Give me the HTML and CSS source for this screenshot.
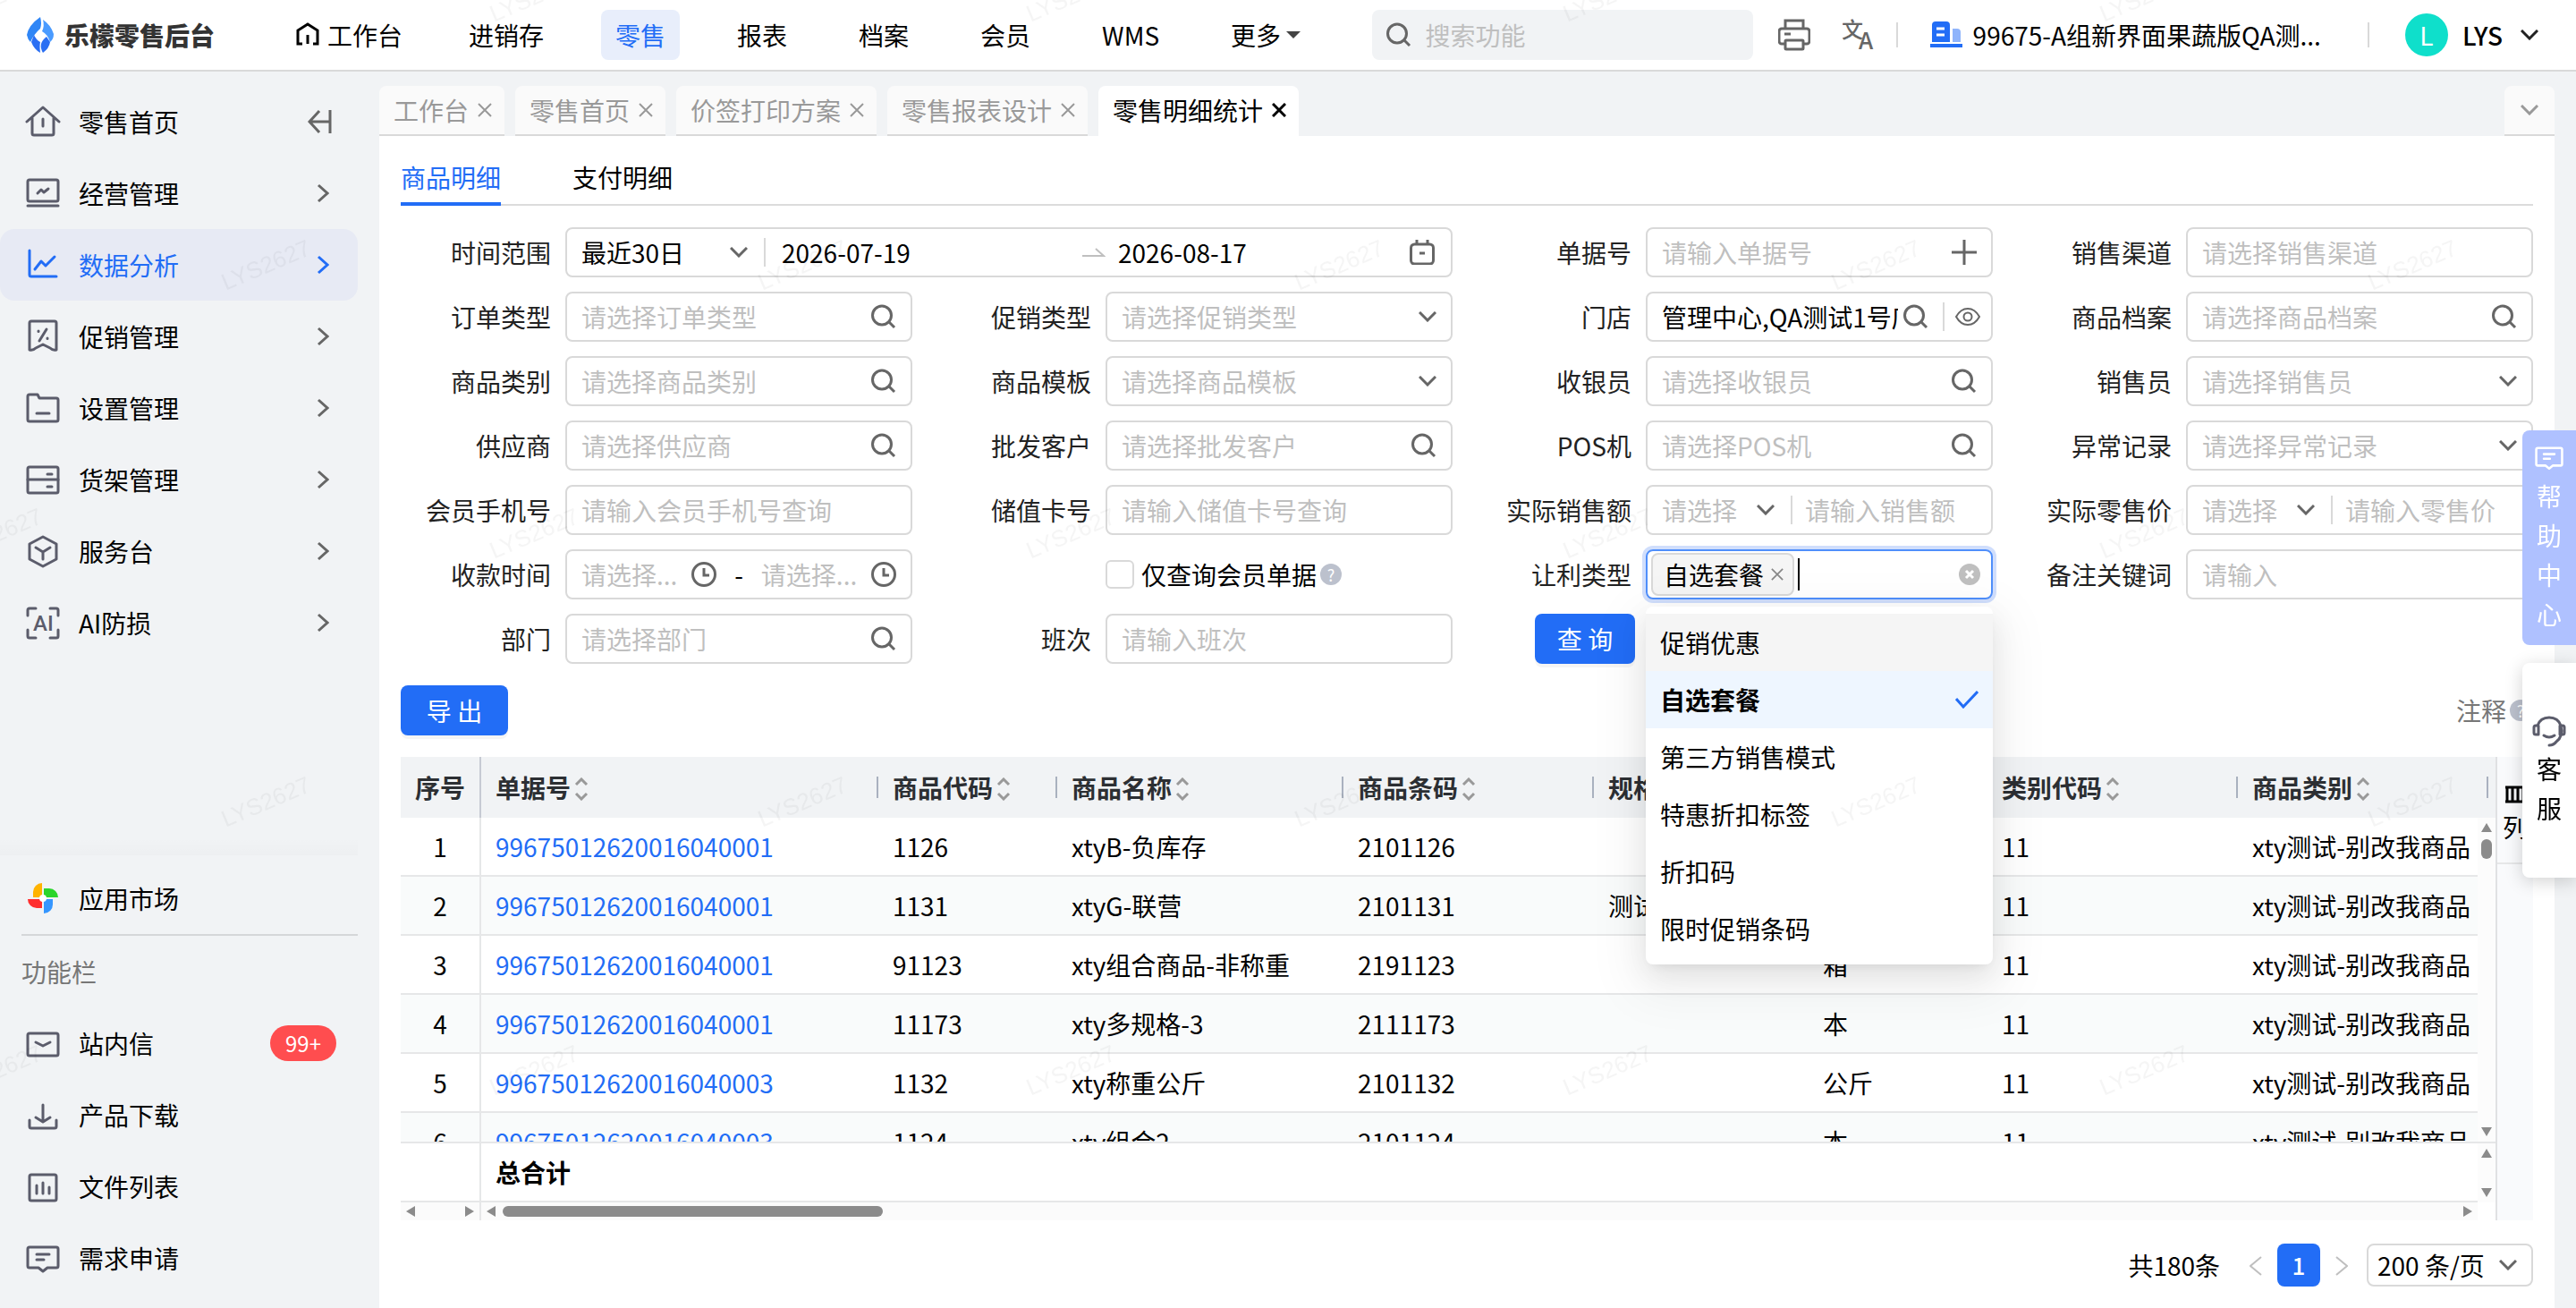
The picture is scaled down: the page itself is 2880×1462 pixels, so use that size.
FILE: index.html
```html
<!DOCTYPE html>
<html lang="zh-CN">
<head>
    <meta charset="UTF-8">
    <meta name="viewport" content="width=device-width, initial-scale=1.0">
    <title>零售明细统计</title>
    <link rel="stylesheet" href="styles.css">
</head>
<body>

<!-- icons -->
<svg class="sprite" xmlns="http://www.w3.org/2000/svg">
    <symbol id="i-search" viewBox="0 0 28 28"><circle cx="12" cy="12.5" r="10.5"/><path d="M20 20l6 6"/></symbol>
    <symbol id="i-down" viewBox="0 0 20 12"><path d="M1 1l9 9 9-9"/></symbol>
    <symbol id="i-right" viewBox="0 0 14 22"><path d="M2 2l10 9-10 9"/></symbol>
    <symbol id="i-close" viewBox="0 0 16 16"><path d="M1 1l14 14M15 1L1 15"/></symbol>
    <symbol id="i-clock" viewBox="0 0 28 28"><circle cx="14" cy="14" r="12.5"/><path d="M14 7v8h6"/></symbol>
    <symbol id="i-plus" viewBox="0 0 28 28"><path d="M0 14h28M14 0v28"/></symbol>
    <symbol id="i-date" viewBox="0 0 28 28"><rect x="1.5" y="5" width="25" height="22" rx="4"/><path d="M8 0v5M20 0v5M11 15h6"/></symbol>
    <symbol id="i-eye" viewBox="0 0 28 20"><path d="M1 10Q6 1 14 1t13 9q-5 9-13 9T1 10z"/><circle cx="14" cy="10" r="4.5"/></symbol>
    <symbol id="i-sort" viewBox="0 0 16 26"><path d="M2 8l6-6 6 6M2 18l6 6 6-6"/></symbol>
    <symbol id="i-home" viewBox="0 0 40 40"><path d="M2 20L20 4l18 16M8 16v17a2 2 0 0 0 2 2h20a2 2 0 0 0 2-2V16M20 17v8"/></symbol>
    <symbol id="i-monitor" viewBox="0 0 40 40"><rect x="3" y="5" width="34" height="24" rx="2"/><path d="M3 34h34M14 20l4-4 3 3 5-4"/></symbol>
    <symbol id="i-chart" viewBox="0 0 40 40"><path d="M5 4v27a2 2 0 0 0 2 2h28M11 25l7-9 5 5 10-10"/></symbol>
    <symbol id="i-promo" viewBox="0 0 40 40"><path d="M5 5a2 2 0 0 1 2-2h26a2 2 0 0 1 2 2v30q-4 1-7-2l-8-4-8 4q-3 3-7 2zM24 12l-8 13M15 14v.5M25 22v.5"/></symbol>
    <symbol id="i-folder" viewBox="0 0 40 40"><path d="M3 7a2 2 0 0 1 2-2h9l2 4h19a2 2 0 0 1 2 2v22a2 2 0 0 1-2 2H5a2 2 0 0 1-2-2zM13 26h14"/></symbol>
    <symbol id="i-shelf" viewBox="0 0 40 40"><rect x="3" y="6" width="34" height="29" rx="2"/><path d="M3 20h34M25 14h5M25 28h5"/></symbol>
    <symbol id="i-cube" viewBox="0 0 40 40"><path d="M20 4l15 8v17l-15 8-15-8V12zM12 16l8 5 8-5M20 21v8"/></symbol>
    <symbol id="i-corners" viewBox="0 0 40 40"><path d="M3 12V6a2 2 0 0 1 2-2h7M28 4h7a2 2 0 0 1 2 2v6M37 28v7a2 2 0 0 1-2 2h-7M12 37H5a2 2 0 0 1-2-2v-7"/></symbol>
    <symbol id="i-mail" viewBox="0 0 40 40"><rect x="3" y="9" width="34" height="25" rx="2"/><path d="M12 19l8 4 8-4"/></symbol>
    <symbol id="i-download" viewBox="0 0 40 40"><path d="M20 9v17M12 23l8 5 8-5M5 26v7a2 2 0 0 0 2 2h26a2 2 0 0 0 2-2v-7"/></symbol>
    <symbol id="i-file" viewBox="0 0 40 40"><rect x="5" y="7" width="30" height="29" rx="2"/><path d="M13 19v9M20 16v12M27 21v7"/></symbol>
    <symbol id="i-chat" viewBox="0 0 40 40"><path d="M5 8h30a2 2 0 0 1 2 2v19a2 2 0 0 1-2 2H25l-5 4-5-4H5a2 2 0 0 1-2-2V10a2 2 0 0 1 2-2zM13 16h14M13 22h8"/></symbol>
</svg>

<header class="topbar">
    <div class="brand">
        <svg class="brand-logo" viewBox="0 0 30 40">
            <path fill="#2f86f6" d="M15 0Q2 9 0 20q1 5 4 8 4-9 11-15 2-6 0-13z"/>
            <path fill="#4a9bff" d="M18 3q2 7-1 13 6 3 9 12 4-3 4-9-3-10-12-16z"/>
            <path fill="#2a6ff3" d="M5 28q3 8 10 12-1-8 0-12-5-3-7-8zM18 40q7-5 8-12l-4-6q-5 4-6 8-1 5 2 10z"/>
        </svg>
        <span>乐檬零售后台</span>
    </div>
    <nav class="topnav">
        <a href="#" class="topnav-home"><svg class="nav-home-icon" viewBox="0 0 28 28"><path d="M8 24H3V9l11-7 11 7v15h-5M14 14v10"/></svg>工作台</a>
        <a href="#">进销存</a>
        <a href="#" class="active">零售</a>
        <a href="#">报表</a>
        <a href="#">档案</a>
        <a href="#">会员</a>
        <a href="#">WMS</a>
        <a href="#">更多<i class="caret"></i></a>
    </nav>
    <div class="topsearch">
        <svg class="ic ic-28"><use href="#i-search"/></svg>
        <input type="text" placeholder="搜索功能" aria-label="搜索功能">
    </div>
    <div class="toptools">
        <button class="tool" aria-label="打印">
            <svg class="ic ic-36" viewBox="0 0 36 36"><path d="M8 11V2h20v9M8 28H4a3 3 0 0 1-3-3V14a3 3 0 0 1 3-3h28a3 3 0 0 1 3 3v11a3 3 0 0 1-3 3h-4M7 17h7"/><rect x="8" y="24" width="20" height="10" rx="1"/></svg>
        </button>
        <button class="tool" aria-label="语言">
            <svg class="ic-lang" viewBox="0 0 36 36"><text x="-1" y="21" font-size="24">文</text><text x="18" y="34" font-size="26">A</text></svg>
        </button>
    </div>
    <div class="company">
        <svg class="company-icon" viewBox="0 0 36 30"><path fill="#226df6" d="M2 23V4a4 4 0 0 1 4-4h12a4 4 0 0 1 4 4v19zM0 25h36v4H0z"/><path fill="#8fb4fb" d="M25 8h5a4 4 0 0 1 4 4v11h-9z"/><path stroke="#fff" stroke-width="3" d="M7 8h9M7 15h9"/></svg>
        <span>99675-A组新界面果蔬版QA测...</span>
    </div>
    <div class="user">
        <span class="avatar">L</span>
        <b>LYS</b>
        <svg class="ic ic-down dark"><use href="#i-down"/></svg>
    </div>
</header>

<div class="layout">
    <aside class="sidebar">
        <ul class="menu">
            <li><a href="#"><svg class="mi"><use href="#i-home"/></svg>零售首页</a>
                <button class="fold" aria-label="收起菜单"><svg viewBox="0 0 28 28"><path d="M13 2L2 14l11 12M2 14h23M25 1v26"/></svg></button></li>
            <li><a href="#"><svg class="mi"><use href="#i-monitor"/></svg>经营管理</a><svg class="go"><use href="#i-right"/></svg></li>
            <li class="active"><a href="#"><svg class="mi"><use href="#i-chart"/></svg>数据分析</a><svg class="go"><use href="#i-right"/></svg></li>
            <li><a href="#"><svg class="mi"><use href="#i-promo"/></svg>促销管理</a><svg class="go"><use href="#i-right"/></svg></li>
            <li><a href="#"><svg class="mi"><use href="#i-folder"/></svg>设置管理</a><svg class="go"><use href="#i-right"/></svg></li>
            <li><a href="#"><svg class="mi"><use href="#i-shelf"/></svg>货架管理</a><svg class="go"><use href="#i-right"/></svg></li>
            <li><a href="#"><svg class="mi"><use href="#i-cube"/></svg>服务台</a><svg class="go"><use href="#i-right"/></svg></li>
            <li><a href="#"><svg class="mi" viewBox="0 0 40 40"><use href="#i-corners"/><text x="9" y="29" font-size="24">AI</text></svg>AI防损</a><svg class="go"><use href="#i-right"/></svg></li>
        </ul>
        <div class="menu-fade"></div>
        <ul class="menu market">
            <li><a href="#">
                <svg class="pin" viewBox="0 0 40 40"><path fill="#ffb300" d="M19 3v16H9v-6A10 10 0 0 1 19 3z"/><path fill="#2bd52b" d="M21 9h6a10 10 0 0 1 10 10H21z"/><path fill="#ff2e2e" d="M3 21h16v10h-6A10 10 0 0 1 3 21z"/><path fill="#3596ff" d="M21 21h10v6a10 10 0 0 1-10 10z"/><circle cx="20" cy="20" r="4" fill="#fff"/></svg>应用市场</a></li>
        </ul>
        <p class="menu-title">功能栏</p>
        <ul class="menu tools">
            <li><a href="#"><svg class="mi"><use href="#i-mail"/></svg>站内信</a><span class="count">99+</span></li>
            <li><a href="#"><svg class="mi"><use href="#i-download"/></svg>产品下载</a></li>
            <li><a href="#"><svg class="mi"><use href="#i-file"/></svg>文件列表</a></li>
            <li><a href="#"><svg class="mi"><use href="#i-chat"/></svg>需求申请</a></li>
        </ul>
    </aside>

    <main class="main">
        <div class="tabs">
            <div class="tab">工作台<svg><use href="#i-close"/></svg></div>
            <div class="tab">零售首页<svg><use href="#i-close"/></svg></div>
            <div class="tab">价签打印方案<svg><use href="#i-close"/></svg></div>
            <div class="tab">零售报表设计<svg><use href="#i-close"/></svg></div>
            <div class="tab active">零售明细统计<svg><use href="#i-close"/></svg></div>
            <button class="tab tab-more" aria-label="更多标签"><svg class="ic-down"><use href="#i-down"/></svg></button>
        </div>

        <section class="page">
            <div class="subtabs">
                <a href="#" class="active">商品明细</a>
                <a href="#">支付明细</a>
            </div>

            <form class="filters">
                <div class="field wide">
                    <label for="range">时间范围</label>
                    <div class="box range">
                        <select id="range" class="range-type"><option>最近30日</option></select>
                        <svg class="ic ic-down"><use href="#i-down"/></svg>
                        <i class="split"></i>
                        <input type="text" class="date date-start" value="2026-07-19" aria-label="开始日期">
                        <svg class="arrow" viewBox="0 0 26 12"><path d="M0 10h24L15 2"/></svg>
                        <input type="text" class="date" value="2026-08-17" aria-label="结束日期">
                        <svg class="ic ic-28"><use href="#i-date"/></svg>
                    </div>
                </div>
                <div class="field">
                    <label for="order">单据号</label>
                    <div class="box"><input type="text" id="order" placeholder="请输入单据号"><svg class="ic ic-28"><use href="#i-plus"/></svg></div>
                </div>
                <div class="field">
                    <label for="channel">销售渠道</label>
                    <div class="box"><input type="text" id="channel" placeholder="请选择销售渠道"></div>
                </div>

                <div class="field">
                    <label for="otype">订单类型</label>
                    <div class="box"><input type="text" id="otype" placeholder="请选择订单类型"><svg class="ic ic-28"><use href="#i-search"/></svg></div>
                </div>
                <div class="field">
                    <label for="ptype">促销类型</label>
                    <div class="box"><select id="ptype" class="empty"><option>请选择促销类型</option></select><svg class="ic ic-down"><use href="#i-down"/></svg></div>
                </div>
                <div class="field">
                    <label for="shop">门店</label>
                    <div class="box shop">
                        <input type="text" id="shop" value="管理中心,QA测试1号店">
                        <svg class="ic ic-28"><use href="#i-search"/></svg>
                        <i class="split"></i>
                        <svg class="ic ic-eye"><use href="#i-eye"/></svg>
                    </div>
                </div>
                <div class="field">
                    <label for="goods">商品档案</label>
                    <div class="box"><input type="text" id="goods" placeholder="请选择商品档案"><svg class="ic ic-28"><use href="#i-search"/></svg></div>
                </div>

                <div class="field">
                    <label for="cate">商品类别</label>
                    <div class="box"><input type="text" id="cate" placeholder="请选择商品类别"><svg class="ic ic-28"><use href="#i-search"/></svg></div>
                </div>
                <div class="field">
                    <label for="tpl">商品模板</label>
                    <div class="box"><select id="tpl" class="empty"><option>请选择商品模板</option></select><svg class="ic ic-down"><use href="#i-down"/></svg></div>
                </div>
                <div class="field">
                    <label for="cashier">收银员</label>
                    <div class="box"><input type="text" id="cashier" placeholder="请选择收银员"><svg class="ic ic-28"><use href="#i-search"/></svg></div>
                </div>
                <div class="field">
                    <label for="seller">销售员</label>
                    <div class="box"><select id="seller" class="empty"><option>请选择销售员</option></select><svg class="ic ic-down"><use href="#i-down"/></svg></div>
                </div>

                <div class="field">
                    <label for="supplier">供应商</label>
                    <div class="box"><input type="text" id="supplier" placeholder="请选择供应商"><svg class="ic ic-28"><use href="#i-search"/></svg></div>
                </div>
                <div class="field">
                    <label for="whole">批发客户</label>
                    <div class="box"><input type="text" id="whole" placeholder="请选择批发客户"><svg class="ic ic-28"><use href="#i-search"/></svg></div>
                </div>
                <div class="field">
                    <label for="pos">POS机</label>
                    <div class="box"><input type="text" id="pos" placeholder="请选择POS机"><svg class="ic ic-28"><use href="#i-search"/></svg></div>
                </div>
                <div class="field">
                    <label for="abnormal">异常记录</label>
                    <div class="box"><select id="abnormal" class="empty"><option>请选择异常记录</option></select><svg class="ic ic-down"><use href="#i-down"/></svg></div>
                </div>

                <div class="field">
                    <label for="phone">会员手机号</label>
                    <div class="box"><input type="text" id="phone" placeholder="请输入会员手机号查询"></div>
                </div>
                <div class="field">
                    <label for="card">储值卡号</label>
                    <div class="box"><input type="text" id="card" placeholder="请输入储值卡号查询"></div>
                </div>
                <div class="field">
                    <label for="sale">实际销售额</label>
                    <div class="box">
                        <select class="empty op" aria-label="销售额条件"><option>请选择</option></select>
                        <svg class="ic ic-down"><use href="#i-down"/></svg>
                        <i class="split"></i>
                        <input type="text" id="sale" placeholder="请输入销售额">
                    </div>
                </div>
                <div class="field">
                    <label for="price">实际零售价</label>
                    <div class="box">
                        <select class="empty op" aria-label="零售价条件"><option>请选择</option></select>
                        <svg class="ic ic-down"><use href="#i-down"/></svg>
                        <i class="split"></i>
                        <input type="text" id="price" placeholder="请输入零售价">
                    </div>
                </div>

                <div class="field">
                    <label for="paytime">收款时间</label>
                    <div class="box times">
                        <input type="text" id="paytime" placeholder="请选择...">
                        <svg class="ic ic-28"><use href="#i-clock"/></svg>
                        <span>-</span>
                        <input type="text" placeholder="请选择..." aria-label="收款结束时间">
                        <svg class="ic ic-28"><use href="#i-clock"/></svg>
                    </div>
                </div>
                <div class="field check">
                    <input type="checkbox" id="member"><label for="member">仅查询会员单据</label><i class="help-dot">?</i>
                </div>
                <div class="field">
                    <label for="discount">让利类型</label>
                    <div class="box focus">
                        <span class="tag">自选套餐<svg><use href="#i-close"/></svg></span>
                        <i class="cursor"></i>
                        <input type="text" id="discount">
                        <button type="button" class="clear" aria-label="清除"><svg viewBox="0 0 24 24"><path d="M8 8l8 8M16 8l-8 8"/></svg></button>
                        <ul class="dropdown">
                            <li class="hover">促销优惠</li>
                            <li class="selected">自选套餐<svg viewBox="0 0 26 20"><path d="M1 9l8 9L25 1"/></svg></li>
                            <li>第三方销售模式</li>
                            <li>特惠折扣标签</li>
                            <li>折扣码</li>
                            <li>限时促销条码</li>
                        </ul>
                    </div>
                </div>
                <div class="field">
                    <label for="remark">备注关键词</label>
                    <div class="box"><input type="text" id="remark" placeholder="请输入"></div>
                </div>

                <div class="field">
                    <label for="dept">部门</label>
                    <div class="box"><input type="text" id="dept" placeholder="请选择部门"><svg class="ic ic-28"><use href="#i-search"/></svg></div>
                </div>
                <div class="field">
                    <label for="shift">班次</label>
                    <div class="box"><input type="text" id="shift" placeholder="请输入班次"></div>
                </div>
                <div class="field submit">
                    <button type="button" class="btn">查 询</button>
                </div>
            </form>

            <div class="actions">
                <button type="button" class="btn export">导 出</button>
                <span class="note">注释<i class="help-dot">?</i></span>
            </div>

            <div class="grid">
                <div class="grid-main">
                    <div class="grid-head">
                        <table>
                            <colgroup><col class="c1"><col class="c2"><col class="c3"><col class="c4"><col class="c5"><col class="c6"><col class="c3"><col class="c5"><col class="c5"></colgroup>
                            <thead>
                                <tr>
                                    <th>序号</th>
                                    <th>单据号<svg><use href="#i-sort"/></svg></th>
                                    <th>商品代码<svg><use href="#i-sort"/></svg></th>
                                    <th>商品名称<svg><use href="#i-sort"/></svg></th>
                                    <th>商品条码<svg><use href="#i-sort"/></svg></th>
                                    <th>规格<svg><use href="#i-sort"/></svg></th>
                                    <th>单位<svg><use href="#i-sort"/></svg></th>
                                    <th>类别代码<svg><use href="#i-sort"/></svg></th>
                                    <th>商品类别<svg><use href="#i-sort"/></svg></th>
                                </tr>
                            </thead>
                        </table>
                    </div>
                    <div class="grid-row grid-body">
                        <div class="clip">
                            <table>
                                <colgroup><col class="c1"><col class="c2"><col class="c3"><col class="c4"><col class="c5"><col class="c6"><col class="c3"><col class="c5"><col class="c5"></colgroup>
                                <tbody>
                                    <tr><td>1</td><td><a href="#">99675012620016040001</a></td><td>1126</td><td>xtyB-负库存</td><td>2101126</td><td></td><td>本</td><td>11</td><td>xty测试-别改我商品</td></tr>
                                    <tr><td>2</td><td><a href="#">99675012620016040001</a></td><td>1131</td><td>xtyG-联营</td><td>2101131</td><td>测试</td><td>本</td><td>11</td><td>xty测试-别改我商品</td></tr>
                                    <tr><td>3</td><td><a href="#">99675012620016040001</a></td><td>91123</td><td>xty组合商品-非称重</td><td>2191123</td><td></td><td>箱</td><td>11</td><td>xty测试-别改我商品</td></tr>
                                    <tr><td>4</td><td><a href="#">99675012620016040001</a></td><td>11173</td><td>xty多规格-3</td><td>2111173</td><td></td><td>本</td><td>11</td><td>xty测试-别改我商品</td></tr>
                                    <tr><td>5</td><td><a href="#">99675012620016040003</a></td><td>1132</td><td>xty称重公斤</td><td>2101132</td><td></td><td>公斤</td><td>11</td><td>xty测试-别改我商品</td></tr>
                                    <tr><td>6</td><td><a href="#">99675012620016040003</a></td><td>1124</td><td>xty组合2</td><td>2101124</td><td></td><td>本</td><td>11</td><td>xty测试-别改我商品</td></tr>
                                </tbody>
                            </table>
                        </div>
                        <div class="vscroll"><i class="up"></i><b></b><i class="dn"></i></div>
                    </div>
                    <div class="grid-row grid-foot">
                        <div class="clip">
                            <table>
                                <colgroup><col class="c1"><col></colgroup>
                                <tbody><tr><td></td><td>总合计</td></tr></tbody>
                            </table>
                        </div>
                        <div class="vscroll"><i class="up"></i><i class="dn"></i></div>
                    </div>
                    <div class="hscroll">
                        <div class="hs-pin"><i class="lf"></i><i class="rt"></i></div>
                        <div class="hs-main"><i class="lf"></i><b></b><i class="rt"></i></div>
                    </div>
                </div>
                <div class="grid-side">
                    <button type="button">
                        <svg viewBox="0 0 24 20"><path d="M1 2h22M1 18h22M3 2v16M9 2v16M15 2v16M21 2v16"/></svg>
                        列
                    </button>
                </div>
            </div>

            <div class="pager">
                <span>共180条</span>
                <button type="button" class="pg" aria-label="上一页"><svg viewBox="0 0 14 22"><path d="M13 1L1 11l12 10"/></svg></button>
                <button type="button" class="pg on">1</button>
                <button type="button" class="pg" aria-label="下一页"><svg viewBox="0 0 14 22"><path d="M1 1l12 10L1 21"/></svg></button>
                <div class="size">
                    <select aria-label="每页条数"><option>200 条/页</option></select>
                    <svg class="ic ic-down"><use href="#i-down"/></svg>
                </div>
            </div>
        </section>
    </main>
</div>

<div class="float">
    <button class="float-help"><svg class="mi"><use href="#i-chat"/></svg><span>帮<br>助<br>中<br>心</span></button>
    <button class="float-service">
        <svg class="mi" viewBox="0 0 40 40"><path d="M7 14Q10 5 20 5t13 9q3 12-5 18-3 4-8 4M7 14H5a2 2 0 0 0-2 2v6a2 2 0 0 0 2 2h3V14M33 14h2a2 2 0 0 1 2 2v6a2 2 0 0 1-2 2h-3V14M14 25q6 4 12 0"/></svg>
        <span>客<br>服</span>
    </button>
</div>

<svg class="watermark" aria-hidden="true">
    <defs>
        <pattern id="wm" width="600" height="600" patternUnits="userSpaceOnUse">
            <text transform="translate(298 298) rotate(-23)">LYS2627</text>
            <text transform="translate(598 598) rotate(-23)">LYS2627</text>
            <text transform="translate(-2 598) rotate(-23)">LYS2627</text>
            <text transform="translate(598 -2) rotate(-23)">LYS2627</text>
            <text transform="translate(-2 -2) rotate(-23)">LYS2627</text>
        </pattern>
    </defs>
    <rect width="100%" height="100%" fill="url(#wm)"/>
</svg>

</body>
</html>
```

FILE: styles.css
```css
*{
    box-sizing:border-box;
}
body{
    margin:0;
    height:100vh;
    display:flex;
    flex-direction:column;
    overflow:hidden;
    font-family:"Noto Sans CJK SC",sans-serif;
    font-size:28px;
    line-height:40px;
    color:#000;
    background:#f1f3f5;
}
a{
    color:inherit;
    text-decoration:none;
}
ul{
    list-style:none;
    margin:0;
    padding:0;
}
i{
    font-style:normal;
}
button,input,select{
    font:inherit;
    color:inherit;
}
button{
    border:0;
    padding:0;
    background:none;
}
svg{
    fill:none;
    flex:none;
}
.sprite{
    position:absolute;
    width:0;
    height:0;
}
.ic{
    stroke:#666;
    stroke-width:3;
}
.ic-28{
    width:28px;
    height:28px;
}
.ic-36{
    width:36px;
    height:36px;
}
.ic-down{
    width:20px;
    height:12px;
}
.ic-eye{
    width:28px;
    height:20px;
    stroke-width:2;
}

/* top bar */
.topbar{
    flex:none;
    height:80px;
    padding:0 42px 0 30px;
    display:flex;
    align-items:center;
    background:#fff;
    border-bottom:2px solid #d9d9d9;
}
.brand{
    display:flex;
    align-items:center;
    gap:12px;
    width:286px;
    font-weight:900;
    color:#333;
}
.brand-logo{
    width:30px;
    height:40px;
}
.topnav{
    display:flex;
    gap:48px;
}
.topnav a{
    display:flex;
    align-items:center;
    height:56px;
    padding:0 16px;
    border-radius:8px;
}
.topnav .topnav-home{
    padding:0 10px 0 14px;
    gap:8px;
}
.topnav .active{
    background:#e8eefb;
    color:#226df6;
}
.nav-home-icon{
    width:28px;
    height:28px;
    stroke:#000;
    stroke-width:3;
}
.caret{
    margin-left:6px;
    border:8px solid transparent;
    border-top-color:#444;
    border-bottom:0;
}
.topsearch{
    display:flex;
    align-items:center;
    gap:16px;
    width:426px;
    height:56px;
    margin-left:auto;
    padding:0 16px;
    border-radius:8px;
    background:#f1f3f5;
}
input,select{
    min-width:0;
    border:0;
    padding:0;
    outline:0;
    background:none;
    appearance:none;
}
.topsearch input{
    flex:1;
}
input::placeholder{
    color:#bfbfbf;
    opacity:1;
}
.toptools{
    display:flex;
    gap:36px;
    padding:0 24px 0 28px;
}
.tool{
    height:36px;
}
.tool svg{
    display:block;
}
.ic-lang{
    width:36px;
    height:36px;
}
.ic-lang text{
    fill:#666;
    font-weight:500;
}
.company{
    display:flex;
    align-items:center;
    gap:12px;
    padding:0 54px 0 38px;
    position:relative;
}
.company::before,.company::after{
    content:"";
    position:absolute;
    left:0;
    height:28px;
    border-left:2px solid #d9d9d9;
}
.company::after{
    left:auto;
    right:0;
}
.company-icon{
    width:36px;
    height:30px;
}
.user{
    display:flex;
    align-items:center;
    gap:16px;
    margin-left:40px;
}
.user b{
    font-weight:500;
    margin-right:4px;
}
.avatar{
    width:48px;
    height:48px;
    line-height:48px;
    border-radius:50%;
    background:#0fdfcb;
    color:#fff;
    text-align:center;
}
.dark{
    stroke:#222;
}

/* side menu */
.layout{
    flex:1;
    display:flex;
    min-height:0;
}
.sidebar{
    flex:none;
    width:424px;
    padding:16px 24px 16px 0;
    display:flex;
    flex-direction:column;
}
.menu li{
    display:flex;
    align-items:center;
    justify-content:space-between;
    height:80px;
    padding:0 28px;
    border-radius:16px;
}
.menu a{
    display:flex;
    align-items:center;
    gap:20px;
}
.menu .active{
    background:#e7eaf4;
    color:#226df6;
}
.mi{
    width:40px;
    height:40px;
    stroke:#5b5c6b;
    stroke-width:3;
    stroke-linecap:round;
    stroke-linejoin:round;
}
.mi text{
    font-family:Roboto,sans-serif;
    font-weight:500;
    fill:#5b5c6b;
    stroke:none;
}
.active .mi{
    stroke:#226df6;
}
.pin{
    width:40px;
    height:40px;
}
.go{
    width:14px;
    height:22px;
    margin-right:4px;
    stroke:#666;
    stroke-width:3;
}
.active .go{
    stroke:#226df6;
}
.fold{
    height:28px;
}
.fold svg{
    display:block;
    width:28px;
    height:28px;
    stroke:#666;
    stroke-width:3;
}
.menu-fade{
    height:20px;
    margin-top:auto;
    background:linear-gradient(rgba(0,0,0,0),rgba(0,0,0,.015));
}
.market{
    margin:8px 0 0 24px;
    border-bottom:2px solid #d5d7d9;
}
.market li{
    padding:0 4px;
}
.menu-title{
    margin:0;
    padding:20px 24px;
    color:#777;
}
.count{
    width:74px;
    height:40px;
    margin-right:-4px;
    border-radius:20px;
    background:#ff4d4f;
    color:#fff;
    font-size:24px;
    text-align:center;
}

/* page tabs */
.main{
    flex:1;
    min-width:0;
    display:flex;
    flex-direction:column;
    padding:16px 24px 0 0;
}
.tabs{
    display:flex;
    gap:12px;
}
.tab{
    display:flex;
    align-items:center;
    gap:10px;
    height:56px;
    padding:0 14px 0 16px;
    border-bottom:2px solid #d9d9d9;
    border-radius:8px 8px 0 0;
    background:#fafafa;
    color:#999;
}
.tab svg{
    width:16px;
    height:16px;
    stroke:#999;
    stroke-width:2;
}
.tab.active{
    background:#fff;
    border-color:#fff;
    color:#000;
}
.tab.active svg{
    stroke:#000;
    stroke-width:3;
}
.tab-more{
    margin-left:auto;
    width:56px;
    padding:0;
    justify-content:center;
}
.tab .ic-down{
    width:20px;
    height:12px;
    stroke-width:3;
}
.page{
    flex:1;
    min-height:0;
    display:flex;
    flex-direction:column;
    padding:16px 24px 24px;
    background:#fff;
}
.subtabs{
    display:flex;
    gap:80px;
    box-shadow:inset 0 -2px #dcdcdc;
}
.subtabs a{
    height:62px;
    line-height:60px;
}
.subtabs .active{
    color:#226df6;
    border-bottom:4px solid #226df6;
}

/* filters */
.filters{
    display:grid;
    grid-template-columns:repeat(4,1fr);
    gap:16px 32px;
    margin-top:24px;
}
.field{
    display:flex;
    min-width:0;
    height:56px;
    align-items:center;
}
.field label{
    flex:none;
    width:184px;
    padding-right:16px;
    text-align:right;
    color:#222;
}
.wide{
    grid-column:span 2;
}
.box{
    flex:1;
    min-width:0;
    height:56px;
    display:flex;
    align-items:center;
    padding:0 16px;
    border:2px solid #d9d9d9;
    border-radius:8px;
    position:relative;
}
.box input,.box select{
    flex:1;
    width:0;
    height:40px;
}
.empty{
    color:#bfbfbf;
}
.split{
    height:32px;
    margin:0 14px 0 18px;
    border-left:2px solid #d9d9d9;
}
.range{
    padding-right:18px;
}
.box .range-type{
    flex:none;
    width:166px;
}
.box .date{
    padding-left:4px;
}
.date-start{
    margin-right:10px;
}
.box .op{
    flex:none;
    width:106px;
}
.shop{
    padding-right:12px;
}
.shop .ic-28{
    margin-left:6px;
}
.shop .split{
    margin:0 12px 0 16px;
}
.arrow{
    width:26px;
    height:12px;
    margin-right:10px;
    stroke:#bfbfbf;
    stroke-width:2;
}
.times span{
    margin:0 20px;
}
.times .ic{
    margin-left:8px;
}
.check{
    padding-left:184px;
}
.check input{
    width:32px;
    height:32px;
    margin:0 8px 0 0;
    border:2px solid #d9d9d9;
    border-radius:6px;
}
.field.check label{
    width:auto;
    padding:0;
    color:#000;
}
.help-dot{
    width:24px;
    height:24px;
    margin-left:4px;
    border-radius:50%;
    background:#bcc1cd;
    color:#fff;
    font-size:18px;
    line-height:24px;
    text-align:center;
}
.focus{
    padding:0 12px 0 4px;
    border-color:#4f8ffb;
    box-shadow:0 0 0 4px #d0defc;
}
.tag{
    display:flex;
    align-items:center;
    gap:8px;
    height:48px;
    padding:0 10px 0 12px;
    border:2px solid #d9d9d9;
    border-radius:8px;
    background:#f5f5f5;
}
.tag svg{
    width:14px;
    height:14px;
    stroke:#888;
    stroke-width:2;
}
.cursor{
    height:36px;
    margin-left:4px;
    border-left:2px solid #000;
}
.clear{
    width:24px;
    height:24px;
    border-radius:50%;
    background:#bfbfbf;
}
.clear svg{
    display:block;
    stroke:#fff;
    stroke-width:3;
}
.dropdown{
    position:absolute;
    z-index:5;
    top:62px;
    left:-2px;
    right:-2px;
    padding:8px 0;
    border-radius:8px;
    background:#fff;
    box-shadow:0 12px 32px rgba(0,0,0,.08),0 6px 12px -8px rgba(0,0,0,.12),0 18px 56px 16px rgba(0,0,0,.05);
}
.dropdown li{
    display:flex;
    align-items:center;
    justify-content:space-between;
    height:64px;
    padding:0 16px;
}
.dropdown .hover{
    background:#f5f5f5;
}
.dropdown .selected{
    background:#eef6ff;
    font-weight:600;
}
.dropdown svg{
    width:26px;
    height:20px;
    stroke:#226df6;
    stroke-width:3;
}
.submit{
    width:184px;
    padding-right:12px;
    justify-content:flex-end;
}
.btn{
    width:112px;
    height:56px;
    border-radius:8px;
    background:#226df6;
    color:#fff;
    box-shadow:0 4px 0 rgba(0,0,0,.04);
}
.export{
    width:120px;
}
.actions{
    display:flex;
    align-items:center;
    justify-content:space-between;
    margin:24px 0;
}
.note{
    display:flex;
    align-items:center;
    color:#777;
    padding-right:2px;
}

/* data grid */
.grid{
    flex:1;
    min-height:0;
    display:flex;
}
.grid-main{
    flex:1;
    min-width:0;
    display:flex;
    flex-direction:column;
}
table{
    width:2334px;
    table-layout:fixed;
    border-collapse:separate;
    border-spacing:0;
}
.c1{
    width:90px;
}
.c2{
    width:444px;
}
.c3{
    width:200px;
}
.c4{
    width:320px;
}
.c5{
    width:280px;
}
.c6{
    width:240px;
}
th,td{
    padding:0 16px;
    text-align:left;
    white-space:nowrap;
    overflow:hidden;
}
th:first-child,td:first-child{
    padding:0;
    text-align:center;
    border-right:2px solid #e6e7e8;
}
.grid-head{
    flex:none;
    overflow:hidden;
    background:#f1f3f5;
}
th{
    height:68px;
    font-weight:700;
    color:#2c2f33;
    background:linear-gradient(#a9b1bf,#a9b1bf) right center / 2px 24px no-repeat;
}
th:first-child{
    background:none;
    border-color:#c6cad3;
}
th svg{
    width:16px;
    height:26px;
    margin-left:4px;
    vertical-align:-3px;
    stroke:#999;
    stroke-width:3;
}
.grid-row{
    display:flex;
    min-height:0;
    overflow:hidden;
}
.grid-body{
    flex:1;
    border-bottom:2px solid #e6e7e8;
}
.clip{
    flex:1;
    min-width:0;
    overflow:hidden;
}
td{
    height:66px;
    border-bottom:2px solid #e6e7e8;
}
td a{
    color:#226df6;
}
.grid-body tr:nth-child(even){
    background:#f9fbfb;
}
.grid-foot{
    flex:none;
    font-weight:700;
}
.vscroll{
    flex:none;
    width:20px;
    display:flex;
    flex-direction:column;
    align-items:center;
    padding:6px 0;
    background:#fcfcfc;
}
.vscroll .dn{
    margin-top:auto;
}
.up,.dn{
    border:6px solid transparent;
}
.up{
    border-top:0;
    border-bottom:10px solid #8b8b8b;
}
.dn{
    border-bottom:0;
    border-top:10px solid #8b8b8b;
}
.vscroll b{
    width:12px;
    height:22px;
    margin-top:8px;
    border-radius:6px;
    background:#8b8b8b;
}
.hscroll{
    flex:none;
    display:flex;
    height:20px;
    padding-right:20px;
}
.hs-pin,.hs-main{
    display:flex;
    align-items:center;
    padding:0 6px;
    background:#fbfbfb;
}
.hs-pin{
    width:90px;
    justify-content:space-between;
    border-right:2px solid #e6e7e8;
}
.hs-main{
    flex:1;
}
.hs-main .rt{
    margin-left:auto;
}
.hs-main b{
    width:425px;
    height:12px;
    margin-left:8px;
    border-radius:6px;
    background:#8b8b8b;
}
.lf,.rt{
    border:6px solid transparent;
}
.lf{
    border-left:0;
    border-right:10px solid #8b8b8b;
}
.rt{
    border-right:0;
    border-left:10px solid #8b8b8b;
}
.grid-side{
    flex:none;
    width:42px;
    border-left:2px solid #e0e1e3;
    background:#f9fafc;
}
.grid-side button{
    display:flex;
    flex-direction:column;
    align-items:center;
    width:100%;
    height:120px;
    padding-top:32px;
    border-bottom:2px solid #e6e7e8;
}
.grid-side svg{
    width:24px;
    height:20px;
    margin-bottom:6px;
    stroke:#000;
    stroke-width:3;
}

/* pagination */
.pager{
    display:flex;
    align-items:center;
    justify-content:flex-end;
    margin-top:26px;
}
.pg{
    width:48px;
    height:48px;
    border-radius:8px;
}
.pg svg{
    width:14px;
    height:22px;
    stroke:#bfbfbf;
    stroke-width:2;
}
.pager span{
    margin-right:16px;
}
.pg.on{
    background:#226df6;
    color:#fff;
    font-size:26px;
    font-weight:500;
}
.size{
    display:flex;
    align-items:center;
    width:186px;
    height:48px;
    margin-left:4px;
    padding:0 16px 0 10px;
    border:2px solid #d9d9d9;
    border-radius:8px;
}
.size select{
    flex:1;
    height:40px;
}

/* floating buttons */
.float{
    position:fixed;
    right:0;
    top:481px;
    z-index:6;
    display:flex;
    flex-direction:column;
    gap:20px;
}
.float button{
    display:flex;
    flex-direction:column;
    align-items:center;
    justify-content:center;
    width:60px;
    height:240px;
    border-radius:8px 0 0 8px;
    line-height:44px;
}
.float .float-help{
    background:#afc1ff;
    color:#fff;
}
.float-help .mi{
    width:34px;
    height:34px;
    margin-bottom:4px;
    stroke:#fff;
}
.float .float-service{
    background:#fff;
    box-shadow:0 4px 20px rgba(0,0,0,.18);
}

.watermark{
    position:fixed;
    inset:0;
    z-index:10;
    width:100%;
    height:100%;
    pointer-events:none;
}
.watermark text{
    font-family:"Liberation Sans",sans-serif;
    font-size:26px;
    text-anchor:middle;
    dominant-baseline:middle;
    fill:#000;
    fill-opacity:.04;
}
```
